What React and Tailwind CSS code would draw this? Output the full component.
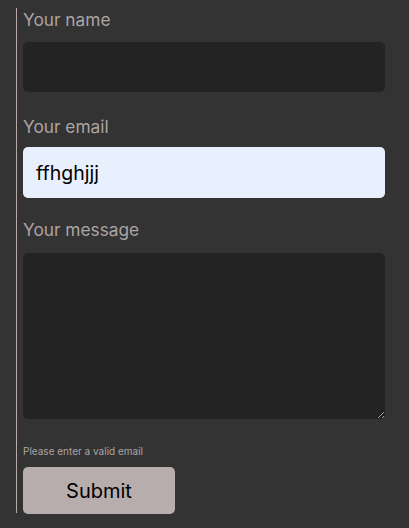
export default function App() {
  return (
    <div className="min-h-[528px] w-[409px] bg-[#333333] pt-2 font-['Inter',sans-serif]">
      <div className="ml-4 w-[369px] h-[505px] border-l border-[#b9aaaa] pl-[6px]">
        <form className="flex flex-col" onSubmit={(e) => e.preventDefault()}>
          <label className="pt-[1px] text-[17.3px] leading-[22px] text-[#aba4a4]">Your name</label>
          <input
            className="mt-[11px] h-[50px] w-[362px] rounded-[5px] bg-[#232323] px-[13px] text-[19px] text-white outline-none"
            type="text"
          />

          <label className="mt-[23px] pt-[1px] text-[17.3px] leading-[22px] text-[#aba4a4]">Your email</label>
          <input
            className="mt-[9px] h-[51px] w-[362px] rounded-[5px] bg-[#e8f0fe] px-[13px] text-[19.5px] text-black outline-none"
            type="text"
            defaultValue="ffhghjjj"
          />

          <label className="mt-[20px] pt-[1px] text-[17.3px] leading-[22px] text-[#aba4a4]">Your message</label>
          <textarea className="mt-[12px] h-[166px] w-[362px] rounded-[5px] bg-[#232323] px-3 py-2 text-white outline-none" />

          <p className="mt-[26px] text-[10px] leading-[12px] text-[#aba4a4]">Please enter a valid email</p>
          <button
            type="submit"
            className="mt-[10px] h-[47px] w-[152px] rounded-[5px] bg-[#b8adad] text-[20px] text-black"
          >
            Submit
          </button>
        </form>
      </div>
    </div>
  );
}
